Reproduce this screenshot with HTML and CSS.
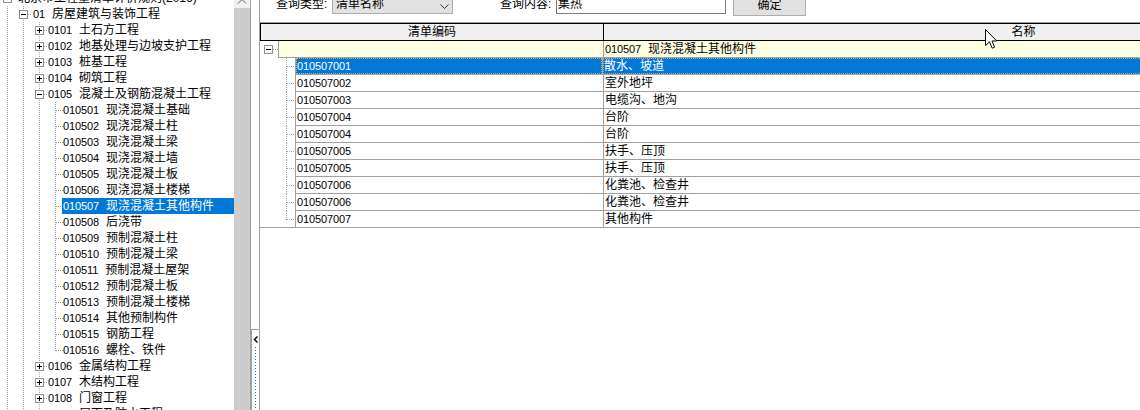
FILE: index.html
```html
<!DOCTYPE html>
<html>
<head>
<meta charset="utf-8">
<title>清单查询</title>
<link rel="stylesheet" href="styles.css">
</head>
<body>
<div class="app">
  <div class="left">
    <div class="tree">
      <div class="tr"><i class="g h"><b class="bx"></b></i><span class="lb lb0">北京市工程量清单计价规则(2016)</span></div>
      <div class="tr"><i class="g v"></i><i class="g t"><b class="bx"></b></i><span class="lb lb1"><span class="num">01</span><span class="nm">房屋建筑与装饰工程</span></span></div>
      <div class="tr"><i class="g v"></i><i class="g v"></i><i class="g t"><b class="bx plus"></b></i><span class="lb lb2"><span class="num">0101</span><span class="nm">土石方工程</span></span></div>
      <div class="tr"><i class="g v"></i><i class="g v"></i><i class="g t"><b class="bx plus"></b></i><span class="lb lb2"><span class="num">0102</span><span class="nm">地基处理与边坡支护工程</span></span></div>
      <div class="tr"><i class="g v"></i><i class="g v"></i><i class="g t"><b class="bx plus"></b></i><span class="lb lb2"><span class="num">0103</span><span class="nm">桩基工程</span></span></div>
      <div class="tr"><i class="g v"></i><i class="g v"></i><i class="g t"><b class="bx plus"></b></i><span class="lb lb2"><span class="num">0104</span><span class="nm">砌筑工程</span></span></div>
      <div class="tr"><i class="g v"></i><i class="g v"></i><i class="g t"><b class="bx"></b></i><span class="lb lb2"><span class="num">0105</span><span class="nm">混凝土及钢筋混凝土工程</span></span></div>
      <div class="tr"><i class="g v"></i><i class="g v"></i><i class="g v"></i><i class="g t"></i><span class="lb lb3"><span class="num">010501</span><span class="nm">现浇混凝土基础</span></span></div>
      <div class="tr"><i class="g v"></i><i class="g v"></i><i class="g v"></i><i class="g t"></i><span class="lb lb3"><span class="num">010502</span><span class="nm">现浇混凝土柱</span></span></div>
      <div class="tr"><i class="g v"></i><i class="g v"></i><i class="g v"></i><i class="g t"></i><span class="lb lb3"><span class="num">010503</span><span class="nm">现浇混凝土梁</span></span></div>
      <div class="tr"><i class="g v"></i><i class="g v"></i><i class="g v"></i><i class="g t"></i><span class="lb lb3"><span class="num">010504</span><span class="nm">现浇混凝土墙</span></span></div>
      <div class="tr"><i class="g v"></i><i class="g v"></i><i class="g v"></i><i class="g t"></i><span class="lb lb3"><span class="num">010505</span><span class="nm">现浇混凝土板</span></span></div>
      <div class="tr"><i class="g v"></i><i class="g v"></i><i class="g v"></i><i class="g t"></i><span class="lb lb3"><span class="num">010506</span><span class="nm">现浇混凝土楼梯</span></span></div>
      <div class="tr"><i class="g v"></i><i class="g v"></i><i class="g v"></i><i class="g t"></i><span class="lb lb3 hl"><span class="num">010507</span><span class="nm">现浇混凝土其他构件</span></span></div>
      <div class="tr"><i class="g v"></i><i class="g v"></i><i class="g v"></i><i class="g t"></i><span class="lb lb3"><span class="num">010508</span><span class="nm">后浇带</span></span></div>
      <div class="tr"><i class="g v"></i><i class="g v"></i><i class="g v"></i><i class="g t"></i><span class="lb lb3"><span class="num">010509</span><span class="nm">预制混凝土柱</span></span></div>
      <div class="tr"><i class="g v"></i><i class="g v"></i><i class="g v"></i><i class="g t"></i><span class="lb lb3"><span class="num">010510</span><span class="nm">预制混凝土梁</span></span></div>
      <div class="tr"><i class="g v"></i><i class="g v"></i><i class="g v"></i><i class="g t"></i><span class="lb lb3"><span class="num">010511</span><span class="nm">预制混凝土屋架</span></span></div>
      <div class="tr"><i class="g v"></i><i class="g v"></i><i class="g v"></i><i class="g t"></i><span class="lb lb3"><span class="num">010512</span><span class="nm">预制混凝土板</span></span></div>
      <div class="tr"><i class="g v"></i><i class="g v"></i><i class="g v"></i><i class="g t"></i><span class="lb lb3"><span class="num">010513</span><span class="nm">预制混凝土楼梯</span></span></div>
      <div class="tr"><i class="g v"></i><i class="g v"></i><i class="g v"></i><i class="g t"></i><span class="lb lb3"><span class="num">010514</span><span class="nm">其他预制构件</span></span></div>
      <div class="tr"><i class="g v"></i><i class="g v"></i><i class="g v"></i><i class="g t"></i><span class="lb lb3"><span class="num">010515</span><span class="nm">钢筋工程</span></span></div>
      <div class="tr"><i class="g v"></i><i class="g v"></i><i class="g v"></i><i class="g l"></i><span class="lb lb3"><span class="num">010516</span><span class="nm">螺栓、铁件</span></span></div>
      <div class="tr"><i class="g v"></i><i class="g v"></i><i class="g t"><b class="bx plus"></b></i><span class="lb lb2"><span class="num">0106</span><span class="nm">金属结构工程</span></span></div>
      <div class="tr"><i class="g v"></i><i class="g v"></i><i class="g t"><b class="bx plus"></b></i><span class="lb lb2"><span class="num">0107</span><span class="nm">木结构工程</span></span></div>
      <div class="tr"><i class="g v"></i><i class="g v"></i><i class="g t"><b class="bx plus"></b></i><span class="lb lb2"><span class="num">0108</span><span class="nm">门窗工程</span></span></div>
      <div class="tr"><i class="g v"></i><i class="g v"></i><i class="g t"><b class="bx plus"></b></i><span class="lb lb2"><span class="num">0109</span><span class="nm">屋面及防水工程</span></span></div>
    </div>
    <div class="vscroll">
      <div class="sb-up"><svg width="16" height="8" viewBox="0 0 16 8"><polyline points="4,3.5 8,-0.5 12,3.5" fill="none" stroke="#606060" stroke-width="1"/></svg></div>
      <div class="sb-thumb"></div>
    </div>
  </div>

  <div class="splitter">
    <div class="split-btn">
      <svg class="split-arrow" width="7" height="8" viewBox="0 0 7 8"><polyline points="4.5,0.5 1.5,3.5 4.5,6.5" fill="none" stroke="#000" stroke-width="1.4"/></svg>
      <div class="split-dots"></div>
    </div>
  </div>

  <div class="right">
    <div class="toolbar">
      <span class="lbl">查询类型:</span>
      <div class="combo"><span>清单名称</span><svg class="chev" width="9" height="5" viewBox="0 0 9 5"><polyline points="0.5,0.5 4.5,4.5 8.5,0.5" fill="none" stroke="#333" stroke-width="1"/></svg></div>
      <span class="lbl lbl2">查询内容:</span>
      <div class="input">集热</div>
      <div class="btn">确定</div>
    </div>

    <div class="grid">
      <div class="ghead">
        <div class="hc hc1">清单编码</div>
        <div class="hc hc2">名称</div>
      </div>

      <div class="grow grp">
        <div class="gg0"><b class="bx"></b></div>
        <div class="gc gc1"></div>
        <div class="gc gc2"><span class="num">010507</span><span class="nm">现浇混凝土其他构件</span></div>
      </div>

      <div class="grow sel">
        <div class="gg t"></div>
        <div class="gc gc1"><div class="fr"><span class="num">010507001</span></div></div>
        <div class="gc gc2"><div class="fr">散水、坡道</div></div>
      </div>
      <div class="grow">
        <div class="gg t"></div>
        <div class="gc gc1"><span class="num">010507002</span></div>
        <div class="gc gc2">室外地坪</div>
      </div>
      <div class="grow">
        <div class="gg t"></div>
        <div class="gc gc1"><span class="num">010507003</span></div>
        <div class="gc gc2">电缆沟、地沟</div>
      </div>
      <div class="grow">
        <div class="gg t"></div>
        <div class="gc gc1"><span class="num">010507004</span></div>
        <div class="gc gc2">台阶</div>
      </div>
      <div class="grow">
        <div class="gg t"></div>
        <div class="gc gc1"><span class="num">010507004</span></div>
        <div class="gc gc2">台阶</div>
      </div>
      <div class="grow">
        <div class="gg t"></div>
        <div class="gc gc1"><span class="num">010507005</span></div>
        <div class="gc gc2">扶手、压顶</div>
      </div>
      <div class="grow">
        <div class="gg t"></div>
        <div class="gc gc1"><span class="num">010507005</span></div>
        <div class="gc gc2">扶手、压顶</div>
      </div>
      <div class="grow">
        <div class="gg t"></div>
        <div class="gc gc1"><span class="num">010507006</span></div>
        <div class="gc gc2">化粪池、检查井</div>
      </div>
      <div class="grow">
        <div class="gg t"></div>
        <div class="gc gc1"><span class="num">010507006</span></div>
        <div class="gc gc2">化粪池、检查井</div>
      </div>
      <div class="grow last">
        <div class="gg l"></div>
        <div class="gc gc1"><span class="num">010507007</span></div>
        <div class="gc gc2">其他构件</div>
      </div>
    </div>
  </div>

  <svg class="cursor" width="13" height="21" viewBox="0 0 13 21"><path d="M0.5 0.5 L0.5 16.5 L4.5 12.8 L7.2 19.2 L9.6 18.2 L7 12 L11.8 12 Z" fill="#fff" stroke="#000" stroke-width="1" stroke-linejoin="miter"/></svg>
</div>
</body>
</html>
```

FILE: styles.css
```css
:root {
  --dv: repeating-linear-gradient(to bottom, #a0a0a0 0 1px, transparent 1px 2px);
  --dh: repeating-linear-gradient(to right, #a0a0a0 0 1px, transparent 1px 2px);
}

html, body {
  margin: 0;
  padding: 0;
  background: #fff;
}

body {
  font-family: "Liberation Sans", "Noto Sans CJK SC", sans-serif;
  font-size: 12px;
  line-height: 16px;
  color: #000;
}

.app {
  position: relative;
  display: flex;
  width: 1140px;
  height: 410px;
  overflow: hidden;
}

.num {
  font-size: 11px;
  letter-spacing: -0.12px;
}

.nm {
  margin-left: 7px;
}

/* ---------- left tree ---------- */
.left {
  flex: none;
  display: flex;
  width: 250px;
  border-right: 1px solid #a0a0a0;
}

.tree {
  width: 234px;
  overflow: hidden;
  display: flex;
  flex-direction: column;
}

.tr {
  display: flex;
  height: 16px;
  line-height: 16px;
  white-space: nowrap;
  margin-left: -1px;
  flex: none;
}

.tr:first-child {
  margin-top: -10px;
}

.g {
  display: flex;
  flex: none;
  width: 16px;
  height: 16px;
  font-style: normal;
}

.g.v {
  background: var(--dv) 8px 0 / 1px 16px no-repeat;
}

.g.t {
  background: var(--dv) 8px 0 / 1px 16px no-repeat, var(--dh) 9px 8px / 7px 1px no-repeat;
}

.g.l {
  background: var(--dv) 8px 0 / 1px 9px no-repeat, var(--dh) 9px 8px / 7px 1px no-repeat;
}

.g.h {
  background: var(--dh) 9px 8px / 7px 1px no-repeat;
}

.bx {
  display: block;
  flex: none;
  width: 9px;
  height: 9px;
  box-sizing: border-box;
  margin: 4px 0 0 4px;
  border: 1px solid #919191;
  background: linear-gradient(#000, #000) center / 5px 1px no-repeat, #fff;
}

.bx.plus {
  background: linear-gradient(#000, #000) center / 5px 1px no-repeat,
              linear-gradient(#000, #000) center / 1px 5px no-repeat, #fff;
}

.lb {
  flex: 1;
}

.lb0 { margin-left: 3px; }
.lb1 { margin-left: 2px; }
.lb2 { margin-left: 1px; }
.lb3 { margin-left: -1px; padding-left: 1px; }

.lb.hl {
  background: #0078d7;
  color: #fff;
}

.vscroll {
  flex: none;
  width: 16px;
  display: flex;
  flex-direction: column;
  background: #f0f0f0;
}

.sb-up {
  height: 8px;
  flex: none;
}

.sb-up svg {
  display: block;
}

.sb-thumb {
  flex: 1;
  background: #cdcdcd;
}

/* ---------- splitter ---------- */
.splitter {
  flex: none;
  width: 8px;
  display: flex;
  flex-direction: column;
  justify-content: flex-end;
}

.split-btn {
  height: 80px;
  border-top: 1px solid #a0a0a0;
  border-left: 1px solid #a0a0a0;
  display: flex;
  flex-direction: column;
}

.split-arrow {
  display: block;
  margin: 6px 0 0 1px;
  flex: none;
}

.split-dots {
  flex: 1;
  width: 1px;
  margin: 3px 0 0 3px;
  background: repeating-linear-gradient(to bottom, #0078d7 0 1px, transparent 1px 3px);
}

/* ---------- right panel ---------- */
.right {
  flex: 1;
  min-width: 0;
  border-left: 1px solid #a0a0a0;
  overflow: hidden;
  display: flex;
  flex-direction: column;
}

.toolbar {
  flex: none;
  display: flex;
  align-items: flex-start;
  height: 30px;
  margin-top: -8px;
  padding-left: 16px;
  white-space: nowrap;
}

.lbl {
  flex: none;
  width: 56px;
  margin-top: 4px;
}

.lbl2 {
  margin-left: 47px;
}

.combo {
  flex: none;
  display: flex;
  width: 121px;
  height: 22px;
  box-sizing: border-box;
  border: 1px solid #adadad;
  background: #e1e1e1;
  padding: 3px 0 0 3px;
}

.chev {
  display: block;
  margin: 8px 3px 0 auto;
}

.input {
  flex: none;
  width: 170px;
  height: 22px;
  box-sizing: border-box;
  border: 1px solid #7a7a7a;
  background: #fff;
  padding: 3px 0 0 1px;
}

.btn {
  flex: none;
  width: 73px;
  height: 24px;
  box-sizing: border-box;
  margin-left: 7px;
  border: 1px solid #adadad;
  background: #e1e1e1;
  padding-top: 4px;
  text-align: center;
}

/* ---------- grid ---------- */
.grid {
  flex: none;
  width: 1184px;
  border-top: 1px solid #a0a0a0;
}

.ghead {
  display: flex;
  height: 18px;
  box-sizing: border-box;
  border: 1px solid #000;
  background: #f0f0f0;
}

.hc {
  text-align: center;
  line-height: 16px;
}

.hc1 {
  width: 342px;
  border-right: 1px solid #000;
}

.hc2 {
  flex: 1;
}

.grow {
  display: flex;
  height: 17px;
  white-space: nowrap;
}

.gg0 {
  flex: none;
  width: 18px;
  display: flex;
  background: var(--dh) 13px 8px / 5px 1px no-repeat;
}

.gg {
  flex: none;
  width: 35px;
}

.gg.t {
  background: var(--dv) 26px 0 / 1px 17px no-repeat, var(--dh) 27px 8px / 8px 1px no-repeat;
}

.gg.l {
  background: var(--dv) 26px 0 / 1px 9px no-repeat, var(--dh) 27px 8px / 8px 1px no-repeat;
}

.last .gg {
  border-bottom: 1px solid #a0a0a0;
}

.gc {
  height: 16px;
  line-height: 16px;
  border-left: 1px solid #a0a0a0;
  border-bottom: 1px solid #a0a0a0;
  padding-left: 1px;
  overflow: hidden;
}

.gc1 {
  flex: none;
  width: 306px;
}

.grp .gc1 {
  width: 323px;
}

.gc2 {
  flex: 1;
}

.grp .gc {
  background: #ffffe1;
}

.sel .gc {
  padding-left: 0;
  background: #0078d7;
  color: #fff;
}

.fr {
  height: 16px;
  box-sizing: border-box;
  border: 1px dotted #d9a06a;
  line-height: 14px;
}

/* ---------- mouse pointer ---------- */
.cursor {
  position: absolute;
  left: 985px;
  top: 29px;
}
```
